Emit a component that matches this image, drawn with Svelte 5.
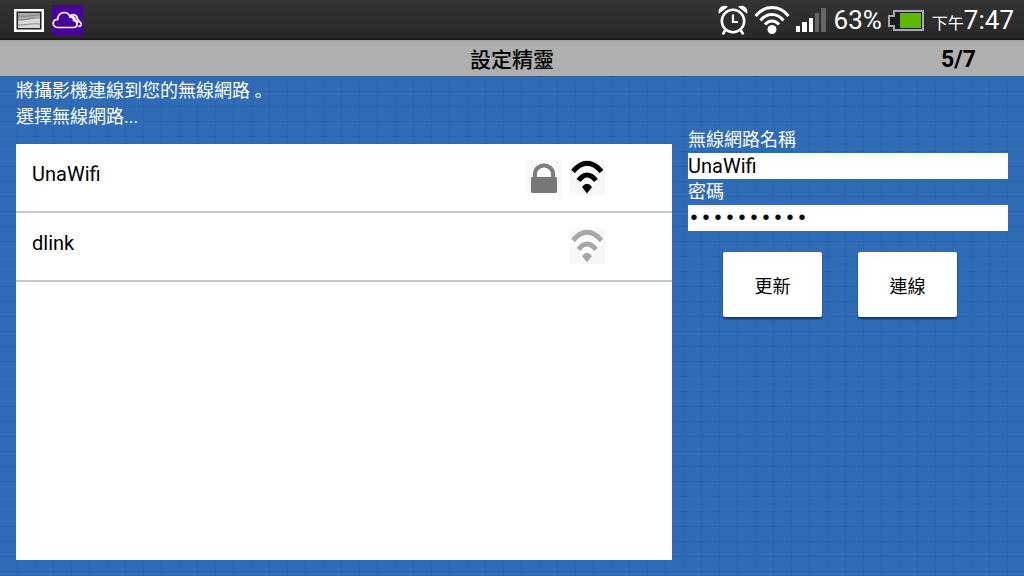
<script lang="ts">
  type Network = { ssid: string; secured: boolean; strong: boolean };

  const networks: Network[] = [
    { ssid: "UnaWifi", secured: true, strong: true },
    { ssid: "dlink", secured: false, strong: false },
  ];

  let ssid = $state("UnaWifi");
  let password = $state("camera1234");

  function selectNetwork(network: Network) {
    ssid = network.ssid;
  }
</script>

<div class="screen">
  <header class="status-bar">
    <div class="status-group">
      <svg class="picture" width="30" height="23" viewBox="0 0 30 23" aria-hidden="true">
        <rect width="30" height="23" fill="#fff" />
        <rect x="2.5" y="2.5" width="25" height="18" fill="#222" />
        <rect x="4" y="4" width="22" height="15" fill="#d8d8d8" />
        <path d="M4 4h22v4c-6 1-13 4-22 3z" fill="#aaa" />
        <path d="M4 7c8 1 14-1 22-1M4 11c8 1 14-3 22-2M4 16c8 0 14-2 22-1" fill="none" stroke="#777" stroke-width="0.8" />
      </svg>
      <svg width="31" height="31" viewBox="0 0 31 31" aria-hidden="true">
        <rect width="31" height="31" rx="1" fill="#4a009f" />
        <g fill="none" stroke="#fff" stroke-width="1.7" stroke-linejoin="round" stroke-linecap="round">
          <path d="M6 22.5C2.5 22.5.9 20 1.2 18c.3-2.300 2-3.600 4.500-3.600C5.500 10.500 8.500 7.500 12 7.500c3.200 0 5.300 1.800 6.200 4.700 2.300-.3 3.700 1.500 3.300 3.300 2.300.3 3.500 1.700 3.500 3.500 0 2.200-1.500 3.500-3.500 3.500z" />
          <path d="M18.500 11.500c.3-1.500 1.800-2 3.500-1.700 2.200.4 3.500 2 3.300 4.400 1.500.2 1.600 1.500 1.300 2.300 2 .7 3 2 2.500 3.600-.3.700-1 1.200-2.200 1.200M20.500 11.500c2 .5 2.800 2 2.600 3.800 1.500.3 2.200 1.200 2.200 2.400" />
        </g>
      </svg>
    </div>

    <div class="status-group right">
      <svg width="30" height="30" viewBox="0 0 30 30" aria-hidden="true">
        <g fill="none" stroke="#fff" stroke-linecap="round">
          <circle cx="15" cy="16" r="11.200" stroke-width="2.600" />
          <path d="M15 9.500V17h5" stroke-width="2.200" stroke-linecap="butt" />
          <path d="M7.500 25l-2.300 3.500M22.500 25l2.300 3.500" stroke-width="2.600" />
        </g>
        <path d="M.8 8.800C-.5 3 4.500-1 10 1.700zM29.200 8.800C30.500 3 25.500-1 20 1.700z" fill="#fff" />
      </svg>
      <svg width="36" height="30" viewBox="0 0 36 30" aria-hidden="true">
        <g fill="none" stroke="#fff" stroke-width="3">
          <path d="M1.500 11C10.500-.2 25.500-.2 34.500 11" />
          <path d="M6.500 15.500c6.500-8 16.500-8 23 0" />
          <path d="M11 19.500c4-4.600 10-4.600 14 0" />
        </g>
        <circle cx="18" cy="24.500" r="4.500" fill="#fff" />
      </svg>
      <svg class="signal" width="32" height="24" viewBox="0 0 32 24" aria-hidden="true">
        <g fill="#fff">
          <rect x="0" y="18" width="4" height="6" />
          <rect x="6" y="14" width="5" height="10" />
          <rect x="13" y="10" width="4" height="14" />
        </g>
        <g fill="#666">
          <rect x="19" y="5" width="4" height="19" />
          <rect x="25" y="0" width="5" height="24" />
        </g>
      </svg>
      <span class="percent">63%</span>
      <svg class="battery" width="36" height="21" viewBox="0 0 36 21" aria-hidden="true">
        <path d="M6 1h29v19H6v-4H1V6h5z" fill="#1b1b1b" stroke="#aaa" stroke-width="2" />
        <rect x="12" y="3" width="21" height="15" fill="#5cb800" />
      </svg>
      <span class="clock"><small>下午</small>7:47</span>
    </div>
  </header>

  <div class="title-bar">
    <h1>設定精靈</h1>
    <span class="step">5/7</span>
  </div>

  <main>
    <section class="picker">
      <p class="intro">將攝影機連線到您的無線網路 <span class="stop">。</span><br />選擇無線網路...</p>

      <ul class="networks">
        {#each networks as network (network.ssid)}
          <li>
            <button class="network" type="button" onclick={() => selectNetwork(network)}>
              <span class="ssid">{network.ssid}</span>
              {#if network.secured}
                <svg class="icon" width="35" height="35" viewBox="0 0 35 35" aria-hidden="true">
                  <path d="M8 18v-4a9 8.500 0 0 1 18 0v4" fill="#fff" stroke="#7d7d7d" stroke-width="4" />
                  <rect x="4" y="17" width="26" height="16" rx="1.500" fill="#777" />
                </svg>
              {/if}
              <svg class="icon" class:weak={!network.strong} width="35" height="35" viewBox="0 0 35 35" aria-hidden="true">
                <path d="M17 34L0 11Q17-8 35 11z" fill="#fff" />
                <g fill="none" stroke="currentColor" stroke-width="5">
                  <path d="M3 11.500Q17-4.800 31.500 11.500" />
                  <path d="M8.500 20.500Q17 9.500 26 20.500" />
                </g>
                <path d="M12 27Q17 20.500 22 27L17 33.500z" fill="currentColor" />
              </svg>
            </button>
          </li>
        {/each}
      </ul>
    </section>

    <form class="credentials" onsubmit={(e) => e.preventDefault()}>
      <label for="ssid">無線網路名稱</label>
      <input id="ssid" type="text" bind:value={ssid} />
      <label for="password">密碼</label>
      <input id="password" type="password" bind:value={password} />
      <div class="actions">
        <button type="button">更新</button>
        <button type="submit">連線</button>
      </div>
    </form>
  </main>
</div>

<style>
  :global(body) {
    margin: 0;
  }

  .screen {
    min-height: 100vh;
    display: flex;
    flex-direction: column;
    font-family: Roboto, "Noto Sans CJK TC", sans-serif;
    font-size: 18px;
    line-height: 26px;
    color: #000;
    background: #306cb6;
  }

  .status-bar {
    box-sizing: border-box;
    height: 40px;
    padding: 2px 10px 0 14px;
    display: flex;
    align-items: center;
    justify-content: space-between;
    background: linear-gradient(#343434, #282828);
    border-bottom: 2px solid #1b1c1a;
    color: #fff;
  }

  .status-group {
    display: flex;
    align-items: center;
    gap: 8px;
  }

  .status-group.right {
    gap: 6px;
  }

  .percent {
    font-size: 26px;
  }

  .clock {
    margin-left: 2px;
    font-size: 26px;
    white-space: nowrap;
  }

  .clock small {
    font-size: 16px;
    line-height: 16px;
  }

  .title-bar {
    box-sizing: border-box;
    height: 36px;
    padding: 4px 48px 0;
    display: grid;
    grid-template-columns: 1fr auto 1fr;
    align-items: center;
    background: linear-gradient(#a0a0a0, #afafaf 4px);
  }

  .title-bar h1 {
    grid-column: 2;
    margin: 0;
    font-size: 21px;
    font-weight: 500;
  }

  .step {
    justify-self: end;
    font-size: 23px;
    font-weight: 700;
  }

  main {
    flex: 1;
    display: grid;
    grid-template-columns: 656fr 320fr;
    gap: 16px;
    padding: 1px 16px 16px;
    border-top: 1px solid #28609f;
    background:
      repeating-linear-gradient(90deg, transparent 0 17px, rgba(40, 82, 184, 0.3) 17px 18px),
      repeating-linear-gradient(transparent 0 14px, rgba(40, 82, 184, 0.3) 14px 15px),
      #306cb6;
  }

  .picker {
    display: flex;
    flex-direction: column;
    gap: 14px;
  }

  .intro {
    margin: 0;
    color: #fff;
  }

  /* the TC face centres its full stop, the JP one keeps it on the baseline */
  .stop {
    font-family: "Noto Sans CJK JP", sans-serif;
    line-height: 18px;
  }

  .networks {
    flex: 1;
    margin: 0;
    padding: 0;
    list-style: none;
    background: #fff;
  }

  .networks li {
    border-bottom: 2px solid #c8c8c8;
  }

  .network {
    box-sizing: border-box;
    width: 100%;
    height: 67px;
    padding: 0 67px 0 16px;
    display: flex;
    align-items: center;
    gap: 8px;
    border: 0;
    background: none;
    color: #000;
    font: inherit;
    text-align: left;
    cursor: pointer;
  }

  .ssid {
    flex: 1;
    padding-bottom: 8px;
    font-size: 20px;
  }

  .icon {
    background: #f7f7f7;
  }

  .icon.weak {
    color: #a8a8a8;
  }

  .credentials {
    display: flex;
    flex-direction: column;
    padding-top: 49px;
  }

  .credentials label {
    color: #fff;
  }

  .credentials input {
    box-sizing: border-box;
    width: 100%;
    height: 26px;
    padding: 0;
    border: 0;
    background: #fff;
    color: #000;
    font-family: inherit;
    font-size: 20px;
    outline: none;
  }

  .credentials input[type="password"] {
    font-family: "Liberation Mono", monospace;
  }

  .actions {
    margin-top: 21px;
    padding-right: 16px;
    display: flex;
    justify-content: center;
    gap: 36px;
  }

  .actions button {
    width: 99px;
    height: 65px;
    padding: 4px 0 0;
    border: 0;
    border-radius: 2px;
    background: #fff;
    color: #000;
    font: inherit;
    box-shadow: 0 2px 2px rgba(0, 0, 0, 0.5);
    cursor: pointer;
  }
</style>
